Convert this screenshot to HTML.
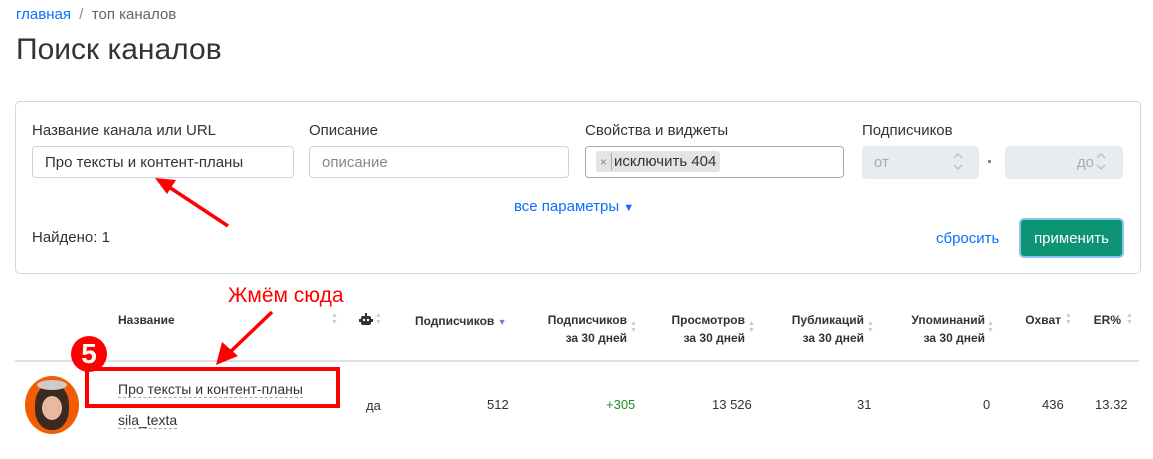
<!DOCTYPE html>
<html><head><meta charset="utf-8"><style>
body{margin:0;width:1153px;height:459px;background:#fff;font-family:"Liberation Sans",sans-serif;color:#212529;position:relative;overflow:hidden}
.a{position:absolute;white-space:nowrap}
.lbl{font-size:15px;color:#333}
.inp{position:absolute;border:1px solid #ced4da;border-radius:4px;height:32px;box-sizing:border-box;font-size:15px;padding:7px 12px;color:#333}
.th{position:absolute;font-size:12px;font-weight:bold;color:#333;text-align:right;line-height:18px;white-space:nowrap}
.td{font-size:13px;color:#333}
.ar{position:absolute;color:#ccc;font-size:7px;line-height:7px}
</style></head><body>
<div class="a" style="left:16px;top:6px;font-size:15px"><span style="color:#0d6efd">главная</span> <span style="color:#888">&nbsp;/&nbsp;</span> <span style="color:#666">топ каналов</span></div>
<div class="a" style="left:16px;top:33px;font-size:30px;color:#333">Поиск каналов</div>
<div class="a" style="left:15px;top:101px;width:1124px;height:171px;border:1px solid #d6d6d6;border-radius:5px"></div>
<div class="a lbl" style="left:32px;top:122px">Название канала или URL</div>
<div class="inp" style="left:32px;top:146px;width:262px">Про тексты и контент-планы</div>
<div class="a lbl" style="left:309px;top:122px">Описание</div>
<div class="inp" style="left:309px;top:146px;width:260px;color:#888">описание</div>
<div class="a lbl" style="left:585px;top:122px">Свойства и виджеты</div>
<div class="inp" style="left:585px;top:146px;width:259px;padding:4px 10px;border-color:#aaa"><span style="background:#e4e4e4;border-radius:3px;padding:2px 4px;display:inline-block;font-size:15px"><span style="color:#888;font-size:12px">×</span><span style="border-left:1px solid #aaa;margin-left:4px;padding-left:2px">исключить 404</span></span></div>
<div class="a lbl" style="left:862px;top:122px">Подписчиков</div>
<div class="a" style="left:862px;top:146px;width:117px;height:33px;background:#e9ecef;border-radius:4px;font-size:15px;color:#aaa;line-height:33px;padding-left:12px;box-sizing:border-box">от</div>
<div class="a" style="left:988px;top:160px;width:3px;height:3px;background:#888"></div>
<div class="a" style="left:1005px;top:146px;width:118px;height:33px;background:#e9ecef;border-radius:4px;font-size:15px;color:#aaa;line-height:33px;text-align:right;padding-right:29px;box-sizing:border-box">до</div>
<svg class="a" style="left:0;top:0" width="1153" height="200"><g stroke="#bbb" stroke-width="1.3" fill="none">
<path d="M954 158 l4 -4 l4 4 M954 165 l4 4 l4 -4"/><path d="M1097 158 l4 -4 l4 4 M1097 165 l4 4 l4 -4"/></g></svg>
<div class="a" style="left:514px;top:198px;font-size:15px;color:#0d6efd">все параметры <span style="font-size:11px">▼</span></div>
<div class="a" style="left:32px;top:229px;font-size:15px;color:#333">Найдено: 1</div>
<div class="a" style="left:936px;top:230px;font-size:15px;color:#0d6efd">сбросить</div>
<div class="a" style="left:1019px;top:218px;width:105px;height:40px;background:#0d9475;border:2px solid #8cc4f5;border-radius:5px;box-sizing:border-box;color:#fff;font-size:15px;line-height:38px;text-align:center">применить</div>

<div class="th" style="left:118px;top:311px">Название</div>
<div class="ar" style="left:331px;top:312px">▲<br>▼</div>
<svg class="a" style="left:359px;top:313px" width="14" height="13"><rect x="2" y="3" width="10" height="9" rx="2" fill="#333"/><rect x="0" y="6" width="14" height="3" fill="#333"/><rect x="6" y="0" width="2" height="3" fill="#333"/><circle cx="5" cy="7" r="1.2" fill="#fff"/><circle cx="9" cy="7" r="1.2" fill="#fff"/></svg>
<div class="ar" style="left:375px;top:312px">▲<br>▼</div>
<div class="th" style="left:415px;top:312px">Подписчиков <span style="color:#7b7bd6;font-size:9px">▼</span></div>
<div class="th" style="right:526px;top:311px">Подписчиков<br>за 30 дней</div><div class="ar" style="left:630px;top:320px">▲<br>▼</div>
<div class="th" style="right:408px;top:311px">Просмотров<br>за 30 дней</div><div class="ar" style="left:748px;top:320px">▲<br>▼</div>
<div class="th" style="right:289px;top:311px">Публикаций<br>за 30 дней</div><div class="ar" style="left:867px;top:320px">▲<br>▼</div>
<div class="th" style="right:168px;top:311px">Упоминаний<br>за 30 дней</div><div class="ar" style="left:987px;top:320px">▲<br>▼</div>
<div class="th" style="right:92px;top:311px">Охват</div><div class="ar" style="left:1065px;top:312px">▲<br>▼</div>
<div class="th" style="right:32px;top:311px">ER%</div><div class="ar" style="left:1126px;top:312px">▲<br>▼</div>
<div class="a" style="left:15px;top:360px;width:1124px;height:2px;background:#dee2e6"></div>

<div class="a" style="left:25px;top:376px;width:54px;height:58px;border-radius:50%;background:#f25c05;overflow:hidden"><div style="position:absolute;left:10px;top:8px;width:34px;height:46px;border-radius:45%;background:#3a2a22"></div><div style="position:absolute;left:17px;top:20px;width:20px;height:24px;border-radius:50%;background:#e8b9a0"></div><div style="position:absolute;left:12px;top:4px;width:30px;height:10px;border-radius:50%;background:#ccc"></div></div>
<div class="a td" style="left:118px;top:381px;font-size:14px;border-bottom:1px dashed #aaa">Про тексты и контент-планы</div>
<div class="a td" style="left:118px;top:412px;font-size:14px;border-bottom:1px dashed #aaa">sila_texta</div>
<div class="a td" style="left:366px;top:398px">да</div>
<div class="a td" style="left:487px;top:397px">512</div>
<div class="a td" style="left:606px;top:397px;color:#2a8a2a">+305</div>
<div class="a td" style="left:712px;top:397px">13 526</div>
<div class="a td" style="left:857px;top:397px">31</div>
<div class="a td" style="left:983px;top:397px">0</div>
<div class="a td" style="left:1042px;top:397px">436</div>
<div class="a td" style="left:1095px;top:397px">13.32</div>

<div class="a" style="left:85px;top:367px;width:255px;height:41px;border:4px solid #f00;box-sizing:border-box"></div>
<div class="a" style="left:71px;top:336px;width:36px;height:36px;border-radius:50%;background:#f00;color:#fff;font-size:28px;font-weight:bold;text-align:center;line-height:36px">5</div>
<div class="a" style="left:228px;top:284px;font-size:21px;color:#f00">Жмём сюда</div>
<svg class="a" style="left:0;top:0" width="1153" height="459"><g stroke="#f00" stroke-width="3.5" fill="#f00">
<line x1="228" y1="226" x2="166" y2="185"/><polygon points="155,178 176,180 167,194" stroke="none"/>
<line x1="272" y1="312" x2="226" y2="356"/><polygon points="216,365 222,342 238,356" stroke="none"/></g></svg>
</body></html>
